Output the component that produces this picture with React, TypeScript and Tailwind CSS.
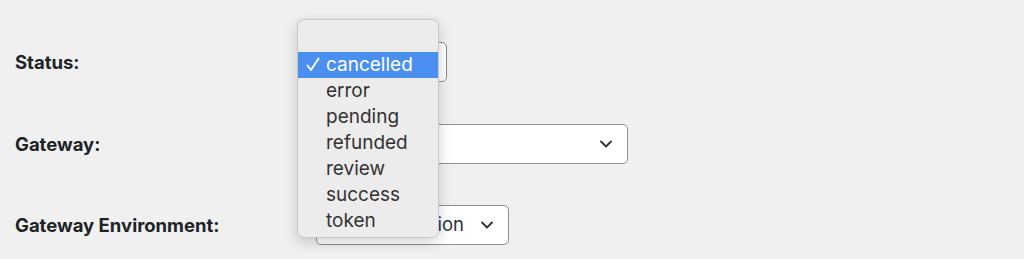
import { ChevronDown } from "lucide-react"

const options = ["cancelled", "error", "pending", "refunded", "review", "success", "token"]

function FakeSelect({ value, width }: { value: string; width: string }) {
  return (
    <div
      className={`flex items-center justify-between h-[40px] ${width} rounded-[5px] border border-[#8c8f94] bg-white pl-[11px] pr-[11px] text-[18.5px] text-[#2c3338]`}
    >
      <span className="truncate">{value}</span>
      <ChevronDown className="w-[20px] h-[20px] text-[#2c3338] shrink-0" strokeWidth={2.2} />
    </div>
  )
}

function Row({ label, children }: { label: string; children: React.ReactNode }) {
  return (
    <div className="flex items-center h-[40px]">
      <div className="w-[301px] shrink-0 pt-[2px] font-bold text-[18.5px] text-[#1d2327]">{label}</div>
      {children}
    </div>
  )
}

export default function App() {
  return (
    <div
      className="relative w-[1024px] h-[259px] bg-[#f0f0f1] overflow-hidden"
      style={{ fontFamily: "Inter, 'Liberation Sans', sans-serif" }}
    >
      <div className="flex flex-col gap-[41.5px] pt-[42px] pl-[15px]">
        <Row label="Status:">
          <FakeSelect value="" width="w-[131px]" />
        </Row>
        <Row label="Gateway:">
          <FakeSelect value="" width="w-[312px]" />
        </Row>
        <Row label="Gateway Environment:">
          <FakeSelect value="Live Production" width="w-[193px]" />
        </Row>
      </div>

      {/* open dropdown menu */}
      <div className="absolute left-[297px] top-[19px] w-[142px] h-[219px] rounded-[7px] border border-[#c9c9c9] bg-[#ececec] pt-[6px] shadow-[0_4px_14px_rgba(0,0,0,0.18)] text-[19px] text-[#333]">
        <div className="h-[26px]" />
        {options.map((opt, i) => (
          <div
            key={opt}
            className={`relative flex items-center h-[26px] pl-[28px] pb-[2px] leading-none ${
              i === 0 ? "bg-[#4a8ff0] text-white" : ""
            }`}
          >
            {i === 0 && (
              <svg
                className="absolute left-[8px] top-[5px] w-[14px] h-[15px]"
                viewBox="0 0 14 15"
                fill="none"
                stroke="currentColor"
                strokeWidth={2}
                strokeLinecap="round"
                strokeLinejoin="round"
              >
                <path d="M1.5 8.5 L5 13 L12.5 1.5" />
              </svg>
            )}
            {opt}
          </div>
        ))}
      </div>
    </div>
  )
}
